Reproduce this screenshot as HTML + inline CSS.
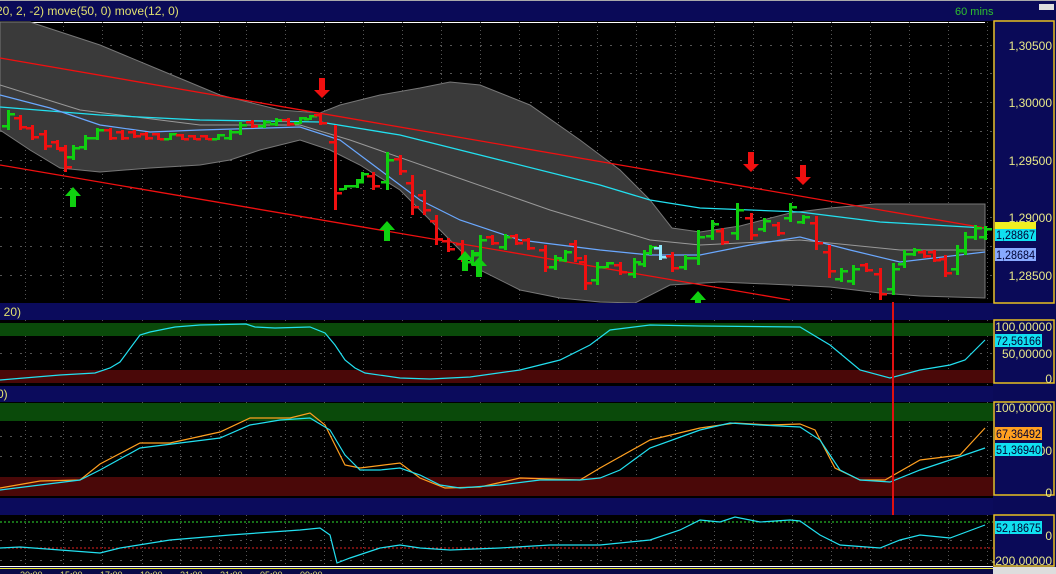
<!DOCTYPE html>
<html><head><meta charset="utf-8"><style>
html,body{margin:0;padding:0;background:#000;width:1056px;height:574px;overflow:hidden}
svg{display:block}
text{font-family:"Liberation Sans",sans-serif}
</style></head><body>
<svg id="s" width="1056" height="574" viewBox="0 0 1056 574" xmlns="http://www.w3.org/2000/svg">
<rect width="1056" height="574" fill="#000"/>
<rect x="0" y="0" width="1056" height="21" fill="#0a0a58"/>
<rect x="0" y="0" width="1056" height="1" fill="#aaa"/>
<line x1="0" y1="22.5" x2="985" y2="22.5" stroke="#fff" stroke-width="1"/>
<text x="-4" y="15" font-size="12" fill="#e0e070">20, 2, -2) move(50, 0) move(12, 0)</text>
<text x="955" y="15" font-size="11" fill="#2ec02e">60 mins</text>
<rect x="1039" y="4" width="15" height="6" fill="#ddd"/>
<g id="grid"></g>
<polygon fill="#3a3a3a" stroke="#777" stroke-width="1" points="0,22 30,22 100,45 160,70 220,95 280,110 320,113 340,105 380,95 420,88 450,82 480,85 530,105 580,140 620,170 650,200 672,228 700,232 740,226 790,213 830,208 875,204 985,204 985,298 920,296 880,293 830,287 790,285 720,282 670,285 635,303 600,302 560,298 520,290 480,270 440,230 400,190 360,165 330,150 300,140 260,150 230,160 200,165 150,168 100,172 60,168 30,150 0,130"/>
<polyline fill="none" stroke="#999" stroke-width="1" points="0,85 80,110 200,125 300,125 350,140 450,175 550,210 650,240 700,245 800,240 900,250 985,250"/>
<polyline fill="none" stroke="#22e0f0" stroke-width="1.3" points="0,107 100,115 200,120 320,122 400,135 500,160 600,185 650,200 700,208 800,212 880,222 985,228"/>
<polyline fill="none" stroke="#6aa8ff" stroke-width="1.2" points="0,95 50,108 100,125 150,132 200,130 300,127 340,140 380,170 420,200 460,220 520,240 600,250 650,255 700,255 750,245 800,237 850,250 900,262 985,252"/>
<line x1="0" y1="58" x2="985" y2="228" stroke="#f01010" stroke-width="1.3"/>
<line x1="0" y1="165" x2="790" y2="300" stroke="#f01010" stroke-width="1.3"/>
<g id="bars"></g>
<g id="arrows"></g>
<rect x="0" y="303" width="994" height="17" fill="#0b0b5c"/>
<rect x="0" y="386" width="994" height="16" fill="#0b0b5c"/>
<rect x="0" y="498" width="994" height="17" fill="#0b0b5c"/>
<text x="-3" y="316" font-size="12" fill="#e0e070">, 20)</text>
<text x="-3" y="398" font-size="12" fill="#e0e070">0)</text>
<rect x="0" y="323" width="994" height="13" fill="#0a4a0a"/>
<rect x="0" y="370" width="994" height="13" fill="#4a0808"/>
<polyline fill="none" stroke="#22e0f0" stroke-width="1.2" points="0,380 60,375 95,373 110,368 120,362 140,335 150,332 175,327 200,325 246,324 255,327 275,328 310,327 325,333 335,345 345,360 355,368 365,373 400,378 430,379 470,377 520,370 560,360 590,345 610,330 650,325 700,326 800,327 830,345 860,370 890,378 920,370 950,365 965,360 985,340"/>
<rect x="0" y="403" width="994" height="18" fill="#0a4a0a"/>
<rect x="0" y="477" width="994" height="19" fill="#4a0808"/>
<polyline fill="none" stroke="#ffa020" stroke-width="1.2" points="0,488 40,481 80,480 100,464 140,443 170,443 220,432 250,418 290,418 310,413 325,425 345,465 360,468 400,463 420,478 445,488 480,487 520,478 580,480 600,468 650,440 700,428 735,423 770,425 800,424 815,430 835,468 860,480 885,480 920,460 960,455 985,428"/>
<polyline fill="none" stroke="#22e0f0" stroke-width="1.2" points="0,490 40,485 80,480 100,470 140,448 180,443 220,438 250,425 280,420 310,418 330,430 345,455 360,470 380,470 400,468 420,475 440,485 460,488 500,485 540,480 580,480 600,478 620,470 650,448 700,430 730,423 760,425 800,427 820,440 840,470 860,480 890,482 920,470 950,460 985,448"/>
<line x1="0" y1="522" x2="994" y2="522" stroke="#30e030" stroke-dasharray="2,2"/>
<line x1="0" y1="548" x2="994" y2="548" stroke="#e02020" stroke-dasharray="2,2"/>
<polyline fill="none" stroke="#22e0f0" stroke-width="1.2" points="0,548 20,547 60,550 100,553 120,548 170,540 230,535 300,530 320,528 330,535 337,563 350,558 365,553 380,548 400,545 420,548 450,550 500,548 550,545 600,545 650,540 680,530 700,520 720,522 735,517 760,522 790,520 800,521 820,535 840,545 880,548 900,540 920,535 950,538 985,525"/>
<rect x="892" y="302" width="2" height="213" fill="#e01010"/>
<rect x="0" y="566" width="994" height="8" fill="#0a0a48"/>
<line x1="0" y1="566.5" x2="994" y2="566.5" stroke="#fff"/>
<line x1="0" y1="568.5" x2="994" y2="568.5" stroke="#ee3"/>
<g font-size="9" fill="#e0e070"><text x="20" y="578">20:00</text><text x="60" y="578">15:00</text><text x="100" y="578">17:00</text><text x="140" y="578">19:00</text><text x="180" y="578">21:00</text><text x="220" y="578">21:00</text><text x="260" y="578">05:00</text><text x="300" y="578">09:00</text></g>
<rect x="993" y="21" width="63" height="553" fill="#0a0a58"/>
<rect x="994" y="21" width="60" height="282" fill="none" stroke="#e8c020" stroke-width="1.5"/>
<rect x="994" y="320" width="60" height="63" fill="none" stroke="#e8c020" stroke-width="1.5"/>
<rect x="994" y="402" width="60" height="93" fill="none" stroke="#e8c020" stroke-width="1.5"/>
<rect x="994" y="515" width="60" height="51" fill="none" stroke="#e8c020" stroke-width="1.5"/>
<rect x="993" y="567" width="63" height="7" fill="#ddd"/>
<g font-size="12" fill="#e8e888" text-anchor="end">
<text x="1052" y="50">1,30500</text>
<text x="1052" y="107">1,30000</text>
<text x="1052" y="165">1,29500</text>
<text x="1052" y="222">1,29000</text>
<text x="1052" y="280">1,28500</text>
<text x="1052" y="331">100,00000</text>
<text x="1052" y="358">50,00000</text>
<text x="1052" y="383">0</text>
<text x="1052" y="412">100,00000</text>
<text x="1052" y="455">00</text>
<text x="1052" y="497">0</text>
<text x="1052" y="540">0</text>
<text x="1052" y="565">-200,00000</text>
</g>
<rect x="995" y="222" width="41" height="9" fill="#f0f020"/>
<rect x="995" y="229" width="41" height="12" fill="#10e0f0"/>
<text x="996" y="239" font-size="12" fill="#003" textLength="39" lengthAdjust="spacingAndGlyphs">1,28867</text>
<rect x="995" y="248" width="41" height="13" fill="#88aaff"/>
<text x="996" y="259" font-size="12" fill="#003" textLength="39" lengthAdjust="spacingAndGlyphs">1,28684</text>
<rect x="995" y="334" width="47" height="13" fill="#10e0f0"/>
<text x="996" y="345" font-size="12" fill="#003" textLength="45" lengthAdjust="spacingAndGlyphs">72,56166</text>
<rect x="995" y="427" width="47" height="13" fill="#ffa020"/>
<text x="996" y="438" font-size="12" fill="#003" textLength="45" lengthAdjust="spacingAndGlyphs">67,36492</text>
<rect x="995" y="443" width="47" height="13" fill="#10e0f0"/>
<text x="996" y="454" font-size="12" fill="#003" textLength="45" lengthAdjust="spacingAndGlyphs">51,36940</text>
<rect x="995" y="521" width="47" height="13" fill="#10e0f0"/>
<text x="996" y="532" font-size="12" fill="#003" textLength="45" lengthAdjust="spacingAndGlyphs">52,18675</text>
</svg>
<script>
var NS="http://www.w3.org/2000/svg";
function el(p,t,a){var e=document.createElementNS(NS,t);for(var k in a)e.setAttribute(k,a[k]);document.getElementById(p).appendChild(e);return e;}
var xs=[25,63,102,142,180,219,246,285,324,363,402,441,480,519,558,597,636,675,714,753,792,831,870,909,948,987];
var panels=[[22,302],[320,385],[402,497],[515,566]];
xs.forEach(function(x){panels.forEach(function(p){el("grid","line",{x1:x+.5,y1:p[0],x2:x+.5,y2:p[1],stroke:"#555","stroke-dasharray":"1,3"});});});
[45,73,102,131,160,188,217,246,275].forEach(function(y){el("grid","line",{x1:0,y1:y+.5,x2:994,y2:y+.5,stroke:"#555","stroke-dasharray":"2,8"});});
[353,436,456,540,560].forEach(function(y){el("grid","line",{x1:0,y1:y+.5,x2:994,y2:y+.5,stroke:"#555","stroke-dasharray":"2,8"});});
var b=[[8,110,130,'g'],[20,115,130,'r'],[32,125,140,'r'],[45,130,150,'r'],[57,140,150,'r'],[65,145,172,'r'],[73,145,160,'g'],[85,135,150,'g'],[97,128,140,'g'],[110,128,140,'r'],[122,130,140,'r'],[134,130,138,'r'],[146,132,140,'r'],[158,133,140,'r'],[170,133,140,'g'],[182,134,140,'r'],[194,135,140,'r'],[206,135,140,'r'],[218,134,140,'g'],[230,130,140,'g'],[240,122,135,'g'],[252,120,128,'r'],[264,120,128,'g'],[276,118,126,'g'],[288,118,126,'r'],[300,117,124,'g'],[310,115,120,'g'],[320,113,125,'r'],[335,125,210,'r'],[345,185,190,'g'],[357,180,188,'g'],[362,172,182,'g'],[373,172,190,'r'],[387,152,190,'g'],[400,155,175,'r'],[412,175,215,'r'],[424,190,215,'r'],[436,215,245,'r'],[448,238,252,'r'],[462,240,262,'r'],[472,250,265,'g'],[480,235,260,'g'],[492,235,245,'r'],[505,234,250,'g'],[516,234,245,'r'],[528,238,250,'r'],[545,245,272,'r'],[555,255,270,'g'],[565,250,262,'g'],[575,240,262,'r'],[585,255,290,'r'],[597,262,285,'g'],[607,262,268,'g'],[620,262,275,'r'],[634,258,278,'g'],[644,250,267,'g'],[650,245,255,'g'],[660,245,260,'w'],[672,252,272,'r'],[685,255,270,'g'],[698,230,265,'g'],[712,220,240,'g'],[722,228,245,'r'],[737,203,240,'g'],[751,213,240,'r'],[764,218,232,'g'],[778,222,236,'r'],[790,203,222,'g'],[803,215,224,'g'],[816,216,250,'r'],[829,245,278,'r'],[841,268,282,'g'],[853,265,285,'g'],[866,263,272,'r'],[880,268,300,'r'],[893,263,295,'g'],[904,250,268,'g'],[914,248,256,'g'],[924,250,258,'r'],[934,250,262,'r'],[945,255,277,'r'],[957,245,275,'g'],[965,232,255,'g'],[975,225,240,'g'],[985,226,240,'g']];
var col={g:'#10d010',r:'#f01010',w:'#90e8ff'};
b.forEach(function(d,i){var c=col[d[3]];var o=d[3]=='g'?d[2]-(d[2]-d[1])*0.2:d[1]+(d[2]-d[1])*0.2;var cl=d[3]=='g'?d[1]+(d[2]-d[1])*0.2:d[2]-(d[2]-d[1])*0.2;
el("bars","rect",{x:d[0]-1,y:d[1],width:3,height:Math.max(d[2]-d[1],2),fill:c});
el("bars","rect",{x:d[0]-6,y:Math.round(o)-1,width:5,height:2.5,fill:c});
el("bars","rect",{x:d[0]+2,y:Math.round(cl)-1,width:5,height:2.5,fill:c});});
function arrow(x,y,down,c){var p=down?[[x-3,y],[x+3,y],[x+3,y+12],[x+8,y+12],[x,y+20],[x-8,y+12],[x-3,y+12]]:[[x,y],[x+8,y+9],[x+3,y+9],[x+3,y+20],[x-3,y+20],[x-3,y+9],[x-8,y+9]];
el("arrows","polygon",{points:p.map(function(q){return q.join(',');}).join(' '),fill:c});}
arrow(322,78,1,'#f01010');arrow(751,152,1,'#f01010');arrow(803,165,1,'#f01010');
arrow(73,187,0,'#10d010');arrow(387,221,0,'#10d010');arrow(465,251,0,'#10d010');arrow(479,257,0,'#10d010');arrow(698,291,0,'#10d010');
</script>
</body></html>
